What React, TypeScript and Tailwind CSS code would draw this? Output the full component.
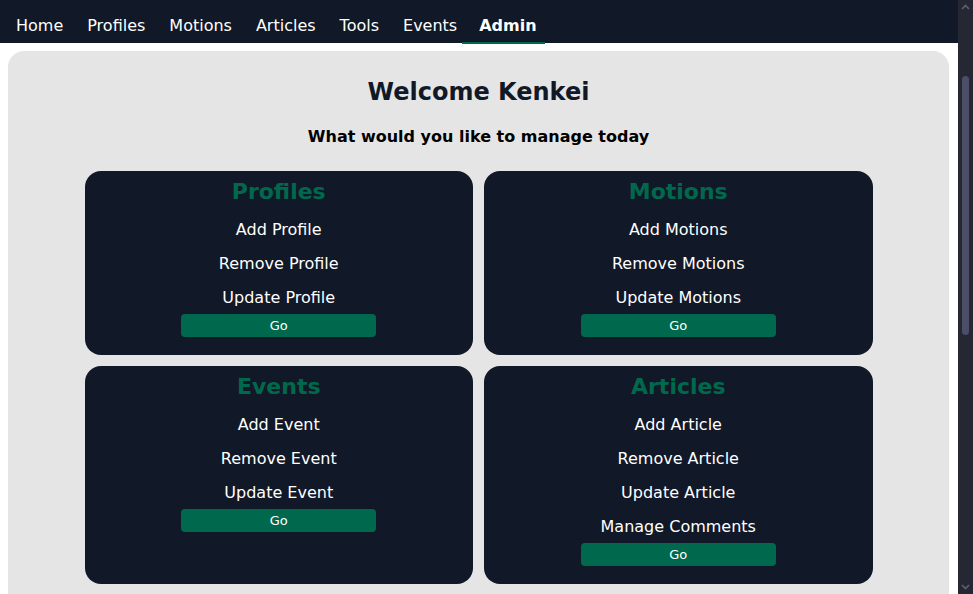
import React from "react";

type Card = { title: string; items: string[] };

const cards: Card[] = [
  { title: "Profiles", items: ["Add Profile", "Remove Profile", "Update Profile"] },
  { title: "Motions", items: ["Add Motions", "Remove Motions", "Update Motions"] },
  { title: "Events", items: ["Add Event", "Remove Event", "Update Event"] },
  { title: "Articles", items: ["Add Article", "Remove Article", "Update Article", "Manage Comments"] },
];

const navItems = ["Home", "Profiles", "Motions", "Articles", "Tools", "Events"];

function Chevron({ down }: { down?: boolean }) {
  return (
    <svg width="9" height="6" viewBox="0 0 9 6" className={down ? "rotate-180" : ""}>
      <path d="M1 5 L4.5 1.5 L8 5" fill="none" stroke="#5d6075" strokeWidth="1.6" />
    </svg>
  );
}

export default function App() {
  return (
    <div
      className="flex h-screen overflow-hidden bg-white"
      style={{ fontFamily: '"DejaVu Sans", Verdana, sans-serif' }}
    >
      <div className="min-w-0 flex-1 overflow-hidden">
        <nav className="flex h-[43px] items-center gap-6 bg-[#111827] pl-4 pt-[8px] text-[16px] leading-6 text-white">
          {navItems.map((n) => (
            <a key={n} className="cursor-pointer">
              {n}
            </a>
          ))}
          <a className="relative ml-[-19px] flex self-stretch items-center pl-[17px] pr-[8px] font-bold">
            Admin
            <span className="absolute bottom-[-1px] left-0 right-0 h-[2px] bg-[#00694d]" />
          </a>
        </nav>

        <main className="mt-2 ml-2 mr-[9px] min-h-[1240px] rounded-2xl bg-[#e5e5e5] pt-[25px] pb-6">
          <h1 className="text-center text-2xl leading-8 font-bold text-[#111827]">Welcome Kenkei</h1>
          <h2 className="mt-[17px] text-center text-[16px] leading-6 font-bold text-black">
            What would you like to manage today
          </h2>
          <div className="mx-auto mt-[22px] grid w-[788px] grid-cols-2 gap-[11px]">
            {cards.map((c) => (
              <div
                key={c.title}
                className="flex flex-col items-center rounded-2xl bg-[#111827] pt-[7px] pb-[18px]"
              >
                <h3 className="h-[28px] text-[22px] leading-[28px] font-bold text-[#00694d]">{c.title}</h3>
                <ul className="mt-[12px] flex flex-col items-center gap-[10px]">
                  {c.items.map((i) => (
                    <li key={i} className="text-[16px] leading-6 text-white">
                      {i}
                    </li>
                  ))}
                </ul>
                <button className="mt-[4px] flex h-[23px] w-[195px] items-center justify-center rounded bg-[#00694d] text-[13px] text-white">
                  Go
                </button>
              </div>
            ))}
          </div>
        </main>
      </div>

      <aside className="flex h-screen w-[15px] shrink-0 flex-col items-center bg-[#252733]">
        <div className="flex h-[14px] items-center justify-center">
          <Chevron />
        </div>
        <div className="mt-[62px] h-[259px] w-[7px] rounded-full bg-[#4b4e67]" />
        <div className="flex-1" />
        <div className="flex h-[14px] items-center justify-center">
          <Chevron down />
        </div>
      </aside>
    </div>
  );
}
